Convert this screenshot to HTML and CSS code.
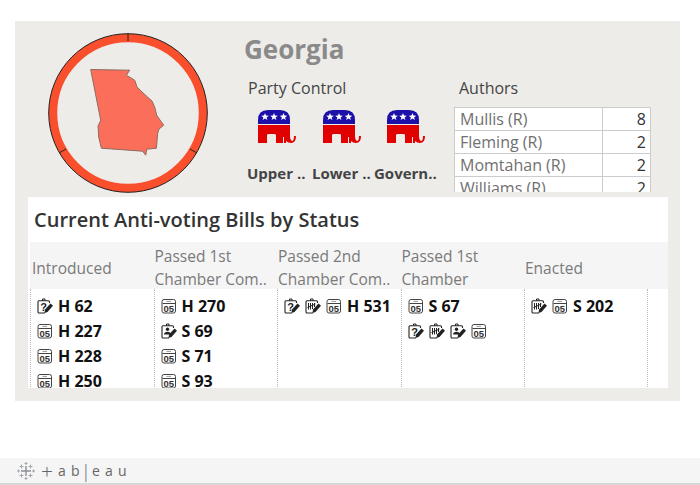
FILE: index.html
```html
<!DOCTYPE html>
<html lang="en">
<head>
  <meta charset="UTF-8">
  <title>Georgia</title>
  <link rel="stylesheet" href="styles.css">
</head>
<body>
  <svg class="defs" width="0" height="0">
    <symbol id="elephant" viewBox="0 0 38 33">
      <path fill="#1c10a8" d="M0 14V10Q0 0 10 0H22Q32 0 32 10V14Z"/>
      <path fill="#e00000" d="M0 15H32V26Q32 30 34 31Q36 31 36 26H38Q38 33 33 33Q30 33 28 31V33H26V27H25V33H18V25Q18 24 16 24H11Q9 24 9 25V33H0Z"/>
      <path fill="#fff" d="M7 3l1 2.600 2.800.1-2.200 1.700.8 2.700-2.400-1.600-2.400 1.600.8-2.700-2.200-1.700 2.800-.1ZM16 3l1 2.600 2.800.1-2.200 1.700.8 2.700-2.400-1.600-2.400 1.600.8-2.700-2.200-1.700 2.800-.1ZM25.500 3l1 2.600 2.800.1-2.200 1.700.8 2.700-2.400-1.600-2.400 1.600.8-2.700-2.200-1.700 2.800-.1Z"/>
    </symbol>
    <symbol id="cal" viewBox="0 0 16 16">
      <rect x="1" y="1.500" width="13.500" height="13.500" rx="2" fill="#fff" stroke="#444"/>
      <path d="M1.500 5.500H14" stroke="#444"/>
      <path d="M5.500 3.400H10" stroke="#999"/>
    </symbol>
    <symbol id="pencil" viewBox="0 0 16 16">
      <path d="M8 11.500L13.500 5.500L16 7.800L10.500 14L7.500 15Z" fill="#222"/>
    </symbol>
    <symbol id="board" viewBox="0 0 16 16">
      <path d="M12.500 5V3.800Q12.500 2.800 11.500 2.800H2Q1 2.800 1 3.800V14Q1 15 2 15H8" fill="none" stroke="#222" stroke-width="1.100"/>
      <path d="M5.500 2.800V1H8V2.800" fill="none" stroke="#222"/>
      <use href="#pencil" width="16" height="16"/>
    </symbol>
    <symbol id="tally" viewBox="0 0 16 16">
      <use href="#board" width="16" height="16"/>
      <path d="M3.500 5V11.500M5.500 5V11.500M7.500 5V11M9.500 5V9M2.500 9.500L10.500 6" fill="none" stroke="#222" stroke-width="1"/>
    </symbol>
    <symbol id="person" viewBox="0 0 16 16">
      <use href="#board" width="16" height="16"/>
      <circle cx="6.500" cy="6.200" r="1.700" fill="#222"/>
      <path d="M3 11.500Q3.300 8.800 6.500 8.800Q9.700 8.800 10 11.500Z" fill="#222"/>
    </symbol>
  </svg>

  <div class="dash">
    <div class="top">
      <svg class="state" width="164" height="164" viewBox="0 0 164 164">
        <circle cx="82" cy="82" r="75" fill="none" stroke="#f94f2c" stroke-width="8.500"/>
        <circle cx="82" cy="82" r="79.300" fill="none" stroke="#222" stroke-width="1"/>
        <path d="M82 2.700V10M151 122L144 118M13 122L20 118" stroke="#222" stroke-width="1"/>
        <path class="ga" d="M44.700 38.500L83.700 39.200L80.400 44.200L88.700 49.200L91 55.900L95 60L101.700 66.200L106 70L108.700 76.200L110.700 84.200L114 89L117.700 94.200L113 98L111.700 102.200L111 110L110.400 117.200L100.700 118.200L99.700 124.200L96.700 120.200L55.400 117.200L52.700 106.200L52.400 100L52 95.200L54.700 89.200Z"/>
      </svg>
      <div class="party">
        <h1 class="state-name">Georgia</h1>
        <h2 class="sec-title party-title">Party Control</h2>
        <div class="elephants">
          <svg class="elephant"><use href="#elephant"/></svg>
          <svg class="elephant"><use href="#elephant"/></svg>
          <svg class="elephant"><use href="#elephant"/></svg>
        </div>
        <div class="chambers">
          <span>Upper ..</span>
          <span>Lower ..</span>
          <span>Govern..</span>
        </div>
      </div>
      <div class="authors">
        <h2 class="sec-title">Authors</h2>
        <div class="author-table">
          <div class="name">Mullis (R)</div><div class="num">8</div>
          <div class="name">Fleming (R)</div><div class="num">2</div>
          <div class="name">Momtahan (R)</div><div class="num">2</div>
          <div class="name">Williams (R)</div><div class="num">2</div>
        </div>
      </div>
    </div>

    <div class="panel">
      <h2 class="panel-title">Current Anti-voting Bills by Status</h2>
      <div class="heads">
        <div>Introduced</div>
        <div>Passed 1st<br>Chamber Com..</div>
        <div>Passed 2nd<br>Chamber Com..</div>
        <div>Passed 1st<br>Chamber</div>
        <div>Enacted</div>
      </div>
      <div class="cols">
        <div class="col">
          <div class="bill"><svg class="ico" viewBox="0 0 16 16"><use href="#board"/><text x="6.500" y="12.800" text-anchor="middle" class="clip-q">?</text></svg>H 62</div>
          <div class="bill"><svg class="ico" viewBox="0 0 16 16"><use href="#cal"/><text x="7.800" y="13.800" text-anchor="middle" class="cal-num">05</text></svg>H 227</div>
          <div class="bill"><svg class="ico" viewBox="0 0 16 16"><use href="#cal"/><text x="7.800" y="13.800" text-anchor="middle" class="cal-num">05</text></svg>H 228</div>
          <div class="bill"><svg class="ico" viewBox="0 0 16 16"><use href="#cal"/><text x="7.800" y="13.800" text-anchor="middle" class="cal-num">05</text></svg>H 250</div>
        </div>
        <div class="col">
          <div class="bill"><svg class="ico" viewBox="0 0 16 16"><use href="#cal"/><text x="7.800" y="13.800" text-anchor="middle" class="cal-num">05</text></svg>H 270</div>
          <div class="bill"><svg class="ico" viewBox="0 0 16 16"><use href="#person"/></svg>S 69</div>
          <div class="bill"><svg class="ico" viewBox="0 0 16 16"><use href="#cal"/><text x="7.800" y="13.800" text-anchor="middle" class="cal-num">05</text></svg>S 71</div>
          <div class="bill"><svg class="ico" viewBox="0 0 16 16"><use href="#cal"/><text x="7.800" y="13.800" text-anchor="middle" class="cal-num">05</text></svg>S 93</div>
        </div>
        <div class="col">
          <div class="bill"><svg class="ico" viewBox="0 0 16 16"><use href="#board"/><text x="6.500" y="12.800" text-anchor="middle" class="clip-q">?</text></svg><svg class="ico" viewBox="0 0 16 16"><use href="#tally"/></svg><svg class="ico" viewBox="0 0 16 16"><use href="#cal"/><text x="7.800" y="13.800" text-anchor="middle" class="cal-num">05</text></svg>H 531</div>
        </div>
        <div class="col">
          <div class="bill"><svg class="ico" viewBox="0 0 16 16"><use href="#cal"/><text x="7.800" y="13.800" text-anchor="middle" class="cal-num">05</text></svg>S 67</div>
          <div class="bill"><svg class="ico" viewBox="0 0 16 16"><use href="#board"/><text x="6.500" y="12.800" text-anchor="middle" class="clip-q">?</text></svg><svg class="ico" viewBox="0 0 16 16"><use href="#tally"/></svg><svg class="ico" viewBox="0 0 16 16"><use href="#person"/></svg><svg class="ico" viewBox="0 0 16 16"><use href="#cal"/><text x="7.800" y="13.800" text-anchor="middle" class="cal-num">05</text></svg></div>
        </div>
        <div class="col">
          <div class="bill"><svg class="ico" viewBox="0 0 16 16"><use href="#tally"/></svg><svg class="ico" viewBox="0 0 16 16"><use href="#cal"/><text x="7.800" y="13.800" text-anchor="middle" class="cal-num">05</text></svg>S 202</div>
        </div>
      </div>
    </div>
  </div>

  <div class="footer">
    <svg class="logo" width="18" height="18" viewBox="0 0 18 18">
      <path class="logo-main" d="M9 4V14M4 9H14"/>
      <path class="logo-small" d="M4.500 2.500V6.500M2.500 4.500H6.500M13.500 2.500V6.500M11.500 4.500H15.500M4.500 11.500V15.500M2.500 13.500H6.500M13.500 11.500V15.500M11.500 13.500H15.500M9 0V3M7.500 1.500H10.500M9 15V18M7.500 16.500H10.500M1.500 7.500V10.500M0 9H3M16.500 7.500V10.500M15 9H18"/>
    </svg>
    <div class="wordmark">
      <span class="plus">+</span>
      <span>a</span><span>b</span><span class="bar">|</span><span>e</span><span>a</span><span>u</span>
    </div>
  </div>
</body>
</html>
```

FILE: styles.css
```css
html, body {
  margin: 0;
  height: 485px;
  overflow: hidden;
  background: #fff;
  font-family: "Open Sans", "Noto Sans", sans-serif;
}
.defs {
  display: block;
  height: 0;
}
.dash {
  margin: 21px 20px 0 15px;
  height: 380px;
  background: #eeece9;
  display: flex;
  flex-direction: column;
}
.top {
  height: 176px;
  overflow: hidden;
  display: flex;
  flex-shrink: 0;
}
.state {
  margin: 10px 0 0 31px;
  flex-shrink: 0;
}
.ga {
  fill: #fb6f5a;
  stroke: #8c6a62;
  stroke-width: 1;
}
.party {
  margin-left: 35px;
  width: 200px;
  flex-shrink: 0;
}
.state-name {
  margin: 12px 0 0 -1px;
  font-size: 26px;
  line-height: 32px;
  font-weight: 700;
  color: #8a8a8a;
}
.sec-title {
  margin: 0;
  font-size: 16px;
  line-height: 20px;
  font-weight: 400;
  color: #444;
}
.party-title {
  margin: 13px 0 0 3px;
}
.elephants {
  display: flex;
  gap: 26.500px;
  margin: 12px 0 0 13px;
}
.elephant {
  width: 38px;
  height: 33px;
}
.chambers {
  display: grid;
  grid-template-columns: 65px 62px auto;
  margin: 20px 0 0 2px;
  font-size: 15px;
  line-height: 20px;
  font-weight: 700;
  color: #444;
}
.authors {
  margin-left: 9px;
  padding-top: 57px;
}
.authors .sec-title {
  margin-left: 5px;
}
.author-table {
  margin-top: 9px;
  width: 197px;
  height: 85px;
  overflow: hidden;
  background: #fff;
  display: grid;
  grid-template-columns: 148px 49px;
  grid-auto-rows: 23px;
  border-top: 1px solid #ccc;
  box-sizing: border-box;
  font-size: 16px;
  line-height: 22px;
}
.author-table > div {
  border-bottom: 1px solid #ccc;
  border-left: 1px solid #ccc;
  box-sizing: border-box;
}
.name {
  padding-left: 5px;
  color: #707070;
}
.num {
  padding-right: 4px;
  text-align: right;
  border-right: 1px solid #ccc;
  color: #333;
}
.panel {
  margin: 0 12px 0 13px;
  height: 191px;
  overflow: hidden;
  background: #fff;
  padding-left: 2px;
}
.panel-title {
  margin: 0;
  padding: 10px 0 0 4px;
  height: 35px;
  font-size: 20px;
  line-height: 26px;
  font-weight: 600;
  color: #333;
}
.heads {
  display: grid;
  grid-template-columns: repeat(5, 123.500px);
  height: 47px;
  box-sizing: border-box;
  background: #f5f5f5;
  align-items: center;
  font-size: 15.500px;
  line-height: 23px;
  color: #7a7a7a;
}
.heads > div {
  padding: 3px 0 0 1px;
  white-space: nowrap;
}
.heads > div:first-child {
  padding-left: 2px;
}
.cols {
  display: grid;
  grid-template-columns: repeat(5, 123.500px);
  height: 110px;
}
.col {
  border-left: 1px dotted #bbb;
  padding: 4px 0 0 6px;
}
.col:last-child {
  border-right: 1px dotted #bbb;
}
.bill {
  display: flex;
  align-items: center;
  height: 25px;
  gap: 5px;
  font-size: 16px;
  font-weight: 700;
  color: #111;
  white-space: nowrap;
}
.ico {
  width: 16px;
  height: 16px;
  flex-shrink: 0;
}
.cal-num {
  font-family: "Liberation Sans", sans-serif;
  font-size: 9.500px;
  fill: #333;
}
.clip-q {
  font-family: "Liberation Sans", sans-serif;
  font-size: 11px;
  font-weight: 700;
  fill: #222;
}
.footer {
  margin-top: 57px;
  height: 25px;
  background: #f5f5f5;
  border-bottom: 2px solid #d8d8d8;
  display: flex;
  align-items: center;
  padding-left: 17px;
  gap: 6px;
}
.logo-main {
  stroke: #8a8f96;
  stroke-width: 1.400;
  fill: none;
}
.logo-small {
  stroke: #a2a6ac;
  stroke-width: 1;
  fill: none;
}
.wordmark {
  display: flex;
  align-items: center;
  font-size: 14px;
  color: #666;
}
.wordmark span {
  width: 13px;
}
.wordmark .plus {
  width: 17px;
  font-size: 21px;
  font-weight: 300;
  line-height: 20px;
}
.wordmark .bar {
  width: 11px;
  margin-left: -3px;
  font-size: 18px;
  font-weight: 300;
  line-height: 20px;
}
```
